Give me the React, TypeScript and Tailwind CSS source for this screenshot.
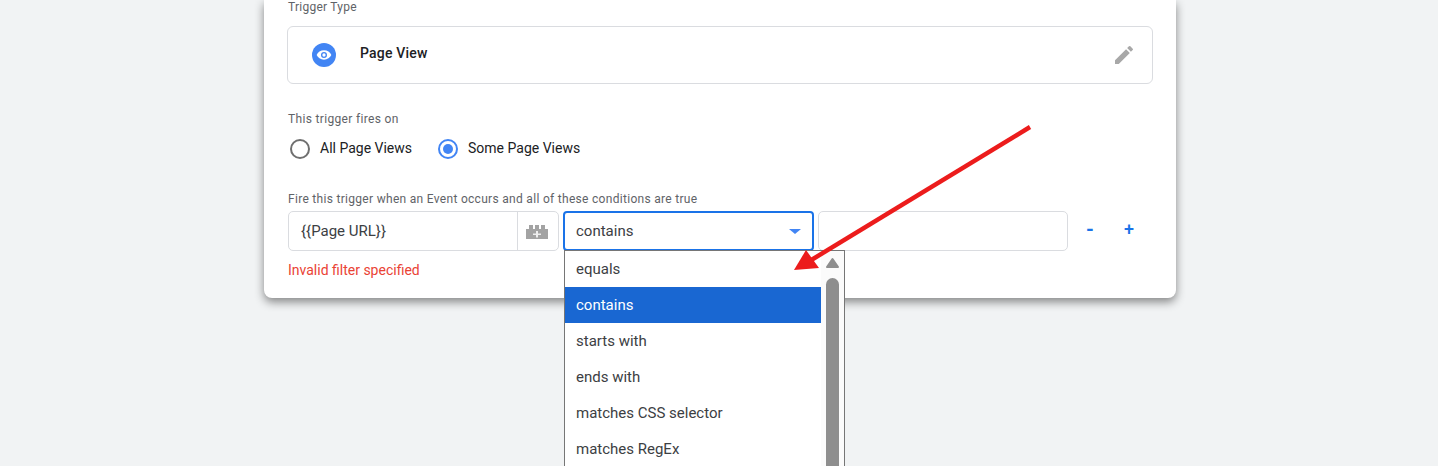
const operators = ['equals', 'contains', 'starts with', 'ends with', 'matches CSS selector', 'matches RegEx']

function Radio({ label, checked }: { label: string; checked?: boolean }) {
  return (
    <div className="flex items-center gap-[10px]">
      <span className={`flex h-5 w-5 items-center justify-center rounded-full border-2 ${checked ? 'border-[#4285f4]' : 'border-[#6f6f6f]'}`}>
        {checked && <span className="h-[10px] w-[10px] rounded-full bg-[#4285f4]" />}
      </span>
      <span className="mb-[2px] text-[14px] leading-[18px] text-[#202124]">{label}</span>
    </div>
  )
}

export default function App() {
  return (
    <div className="relative flex h-[466px] overflow-hidden bg-[#f1f3f4] pl-[264px] font-['Roboto',sans-serif]">
      <div className="h-[298px] w-[912px] rounded-b-lg bg-white px-[23px] shadow-[0_4px_10px_rgba(0,0,0,0.45)]">
        <div className="h-[26px] pl-[1px] text-[12px] leading-[14px] tracking-[0.25px] text-[#5f6368]">Trigger Type</div>

        <div className="flex h-[58px] items-center rounded-md border border-[#dadce0] pl-6 pr-4">
          <span className="flex h-6 w-6 items-center justify-center rounded-full bg-[#4285f4]">
            <svg width="16" height="16" viewBox="0 0 24 24" fill="#fff">
              <path d="M12 5C7 5 2.700 8.100 1 12c1.700 3.900 6 7 11 7s9.300-3.100 11-7c-1.700-3.900-6-7-11-7zm0 11.500a4.500 4.500 0 1 1 0-9 4.500 4.500 0 0 1 0 9zm0-7a2.500 2.500 0 1 0 0 5 2.500 2.500 0 0 0 0-5z" />
            </svg>
          </span>
          <span className="mb-1 ml-6 flex-1 text-[14px] font-medium tracking-[0.2px] text-[#202124]">Page View</span>
          <svg width="24" height="24" viewBox="0 0 24 24" fill="#a8a8a8">
            <path d="M3 17.250V21h3.750L17.810 9.940l-3.750-3.750L3 17.250zM20.710 7.040a1 1 0 0 0 0-1.410l-2.340-2.340a1 1 0 0 0-1.410 0l-1.830 1.830 3.750 3.750 1.830-1.830z" />
          </svg>
        </div>

        <div className="mt-[28px] pl-[1px] text-[12px] leading-[14px] tracking-[0.33px] text-[#5f6368]">This trigger fires on</div>
        <div className="mt-[13px] flex gap-[26px] pl-[3px]">
          <Radio label="All Page Views" />
          <Radio label="Some Page Views" checked />
        </div>

        <div className="mt-[33px] pl-[1px] text-[12px] leading-[14px] tracking-[0.3px] text-[#5f6368]">Fire this trigger when an Event occurs and all of these conditions are true</div>
        <div className="mt-[5px] flex items-center pl-[1px]">
          <div className="flex h-10 w-[271px] rounded-[5px] border border-[#dadce0]">
            <div className="flex flex-1 items-center pl-3 text-[15px] text-[#3c4043]">{'{{Page URL}}'}</div>
            <div className="flex w-[41px] items-center justify-center border-l border-[#dadce0]">
              <svg className="mr-[2px] mt-[2px]" width="22" height="14" viewBox="0 0 22 14">
                <path fill="#a3a3a3" d="M0 4h3V0h4v4h2V0h4v4h2V0h4v4h3v10H0z" />
                <path fill="#eeeeee" d="M10 6h2v2.500h3V10h-3v2.500h-2V10H7V8.500h3z" />
              </svg>
            </div>
          </div>
          <div className="ml-1 flex h-10 w-[251px] items-center rounded-[4px] border-2 border-[#1a73e8] px-[11px] text-[15px] text-[#3c4043]">
            <span className="flex-1">contains</span>
            <span className="h-0 w-0 border-x-[6px] border-t-[5px] border-x-transparent border-t-[#4285f4]" />
          </div>
          <div className="ml-1 h-10 w-[250px] rounded-[5px] border border-[#dadce0] bg-white" />
          <span className="mb-1 ml-[18px] w-2 text-center text-[20px] font-bold leading-none text-[#1a73e8]">-</span>
          <span className="mb-1 ml-[30px] w-[10px] text-center text-[18px] font-medium leading-none text-[#1a73e8]">+</span>
        </div>
        <div className="mt-[11px] pl-[1px] text-[14px] leading-4 text-[#ea4335]">Invalid filter specified</div>
      </div>

      {/* operator dropdown, hangs over the card */}
      <div className="absolute left-[564px] top-[250px] flex h-[240px] w-[281px] border border-[#767676] bg-white">
        <ul className="w-[256px]">
          {operators.map((op) => (
            <li
              key={op}
              className={`flex h-9 items-center pl-[11px] text-[15px] ${op === 'contains' ? 'bg-[#1967d2] text-white' : 'text-[#3c4043]'}`}
            >
              {op}
            </li>
          ))}
        </ul>
        <div className="relative flex-1 bg-[#fbfbfb]">
          <svg className="absolute left-[4px] top-[6px]" width="15" height="12" viewBox="0 0 15 12">
            <path d="M7.500 2L2 10h11z" fill="#8e8e8e" stroke="#8e8e8e" strokeWidth="2" strokeLinejoin="round" />
          </svg>
          <span className="absolute left-[5px] top-[27px] h-[300px] w-[13px] rounded-full bg-[#8e8e8e]" />
        </div>
      </div>

      {/* annotation arrow */}
      <svg className="pointer-events-none absolute left-0 top-0" width="1438" height="466">
        <line x1="1030" y1="127" x2="808" y2="262" stroke="#ec1c1c" strokeWidth="4.5" />
        <polygon points="794,270 806,250 819,268" fill="#ec1c1c" />
      </svg>
    </div>
  )
}
